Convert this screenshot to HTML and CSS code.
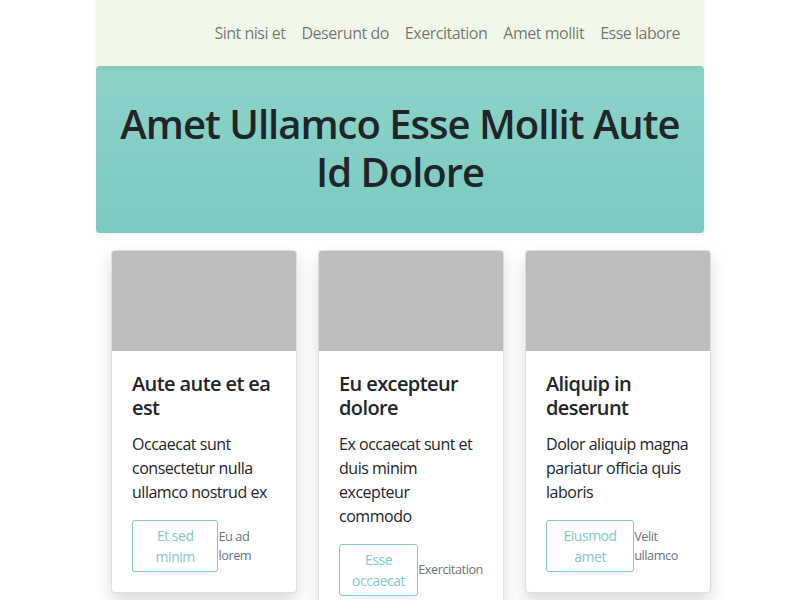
FILE: index.html
```html
<!DOCTYPE html>
<html lang="en">
<head>
<meta charset="utf-8">
<title>Amet Ullamco</title>
<link rel="stylesheet" href="styles.css">
</head>
<body>
<div class="container">
  <nav class="navbar">
    <ul class="nav">
      <li><a class="nav-link" href="#">Sint nisi et</a></li>
      <li><a class="nav-link" href="#">Deserunt do</a></li>
      <li><a class="nav-link" href="#">Exercitation</a></li>
      <li><a class="nav-link" href="#">Amet mollit</a></li>
      <li><a class="nav-link" href="#">Esse labore</a></li>
    </ul>
  </nav>
  <header class="hero">
    <h1 class="hero-title">Amet Ullamco Esse Mollit Aute Id Dolore</h1>
  </header>
  <section class="cards">
    <article class="card">
      <div class="card-img"></div>
      <div class="card-body">
        <h5 class="card-title">Aute aute et ea est</h5>
        <p class="card-text">Occaecat sunt consectetur nulla ullamco nostrud ex</p>
        <div class="card-actions">
          <a class="btn" href="#">Et sed minim</a>
          <small class="muted">Eu ad lorem</small>
        </div>
      </div>
    </article>
    <article class="card">
      <div class="card-img"></div>
      <div class="card-body">
        <h5 class="card-title">Eu excepteur dolore</h5>
        <p class="card-text">Ex occaecat sunt et duis minim excepteur commodo</p>
        <div class="card-actions">
          <a class="btn" href="#">Esse occaecat</a>
          <small class="muted">Exercitation</small>
        </div>
      </div>
    </article>
    <article class="card">
      <div class="card-img"></div>
      <div class="card-body">
        <h5 class="card-title">Aliquip in deserunt</h5>
        <p class="card-text">Dolor aliquip magna pariatur officia quis laboris</p>
        <div class="card-actions">
          <a class="btn" href="#">Eiusmod amet</a>
          <small class="muted">Velit ullamco</small>
        </div>
      </div>
    </article>
  </section>
</div>
</body>
</html>
```
FILE: styles.css
```css
* { box-sizing: border-box; }
body {
  margin: 0;
  background: #fff;
  color: #212529;
  font-family: "Open Sans", "Noto Sans", sans-serif;
  font-size: 16px;
  line-height: 1.5;
  letter-spacing: -0.03em;
}
a { text-decoration: none; }
.container {
  width: 608px;
  margin: 0 auto;
}
.navbar {
  background: #f1f8e9;
  border-radius: 4px;
  padding: 13px 16px;
  box-shadow: 0 2px 4px rgba(0,0,0,.075);
  position: relative;
  z-index: 1;
}
.nav {
  list-style: none;
  margin: 0;
  padding: 0;
  display: flex;
  justify-content: flex-end;
}
.nav-link {
  display: block;
  padding: 8px;
  color: rgba(0,0,0,.55);
}
.hero {
  background: linear-gradient(180deg, #8dd3ca 0%, #7acac0 100%);
  border-radius: 4px;
  padding: 34px 16px 29px;
  text-align: center;
  box-shadow: 0 2px 4px rgba(0,0,0,.06);
}
.hero-title {
  margin: 0 0 8px;
  font-size: 40px;
  line-height: 1.2;
  font-weight: 600;
  letter-spacing: -0.025em;
}
.cards {
  display: flex;
  align-items: flex-start;
  gap: 21px;
  margin: 17px -7px 0 15px;
}
.card {
  flex: 1 1 0;
  min-width: 0;
  background: #fff;
  border: 1px solid rgba(0,0,0,.125);
  border-radius: 4px;
  box-shadow: 0 8px 16px rgba(0,0,0,.15);
  overflow: hidden;
}
.card-img {
  height: 100px;
  background: #bdbdbd;
}
.card-body {
  padding: 21px 20px 20px;
}
.card-title {
  margin: 0 0 12px;
  font-size: 20px;
  line-height: 1.2;
  font-weight: 600;
  letter-spacing: -0.03em;
}
.card-text {
  margin: 0 0 16px;
}
.card-actions {
  display: flex;
  align-items: center;
  justify-content: space-between;
}
.btn {
  display: inline-block;
  text-align: center;
  color: #80cbc4;
  border: 1px solid #80cbc4;
  border-radius: 3px;
  padding: 4px 8px;
  font-size: 14px;
  line-height: 1.5;
}
.muted {
  color: #6c757d;
  font-size: 12.8px;
  line-height: 1.5;
}
```
